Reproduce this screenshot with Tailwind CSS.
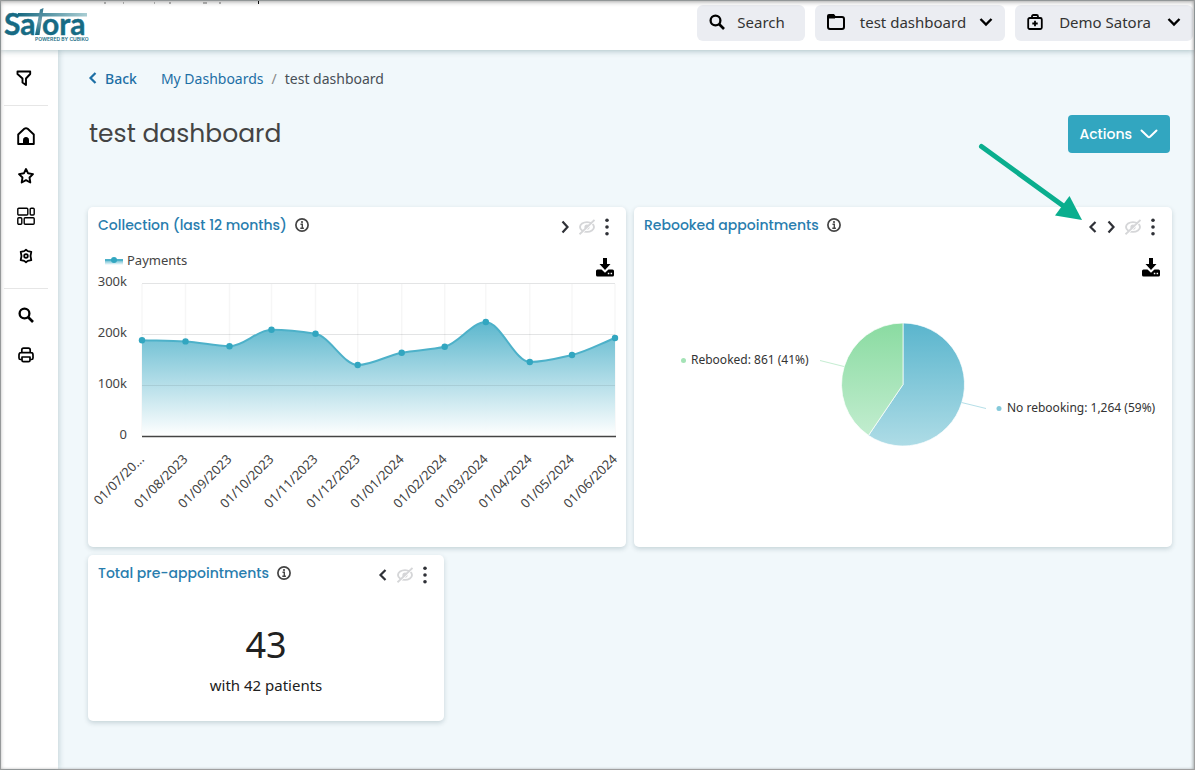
<!DOCTYPE html>
<html lang="en">
  <head>
    <meta charset="UTF-8" />
    <meta name="viewport" content="width=device-width, initial-scale=1.0" />
    <title>test dashboard - Satora</title>
    <script src="https://cdn.jsdelivr.net/npm/@tailwindcss/browser@4"></script>
  </head>
  <body class="bg-[#f1f8fb] font-['Noto_Sans',sans-serif] text-[#333]">
    <!-- Shared icons -->
    <svg class="hidden">
      <symbol id="i-left" viewBox="0 0 10 14"><path d="M7.5 2 2.5 7l5 5" fill="none" stroke="currentColor" stroke-width="2.2" /></symbol>
      <symbol id="i-right" viewBox="0 0 10 14"><path d="m2.5 1.500 5 5.500-5 5.500" fill="none" stroke="currentColor" stroke-width="2.2" /></symbol>
      <symbol id="i-down" viewBox="0 0 14 10"><path d="m1.5 2 5.500 5.500L12.500 2" fill="none" stroke="currentColor" stroke-width="2.400" /></symbol>
      <symbol id="i-search" viewBox="0 0 16 16"><circle cx="6.500" cy="6.500" r="4.900" fill="none" stroke="currentColor" stroke-width="2.300" /><path d="m10 10 5 5" stroke="currentColor" stroke-width="2.600" /></symbol>
      <symbol id="i-info" viewBox="0 0 14 14"><circle cx="7" cy="7" r="6.100" fill="none" stroke="currentColor" stroke-width="1.700" /><path d="M5.500 6.300H7.300V10M5.300 10.200h3.600" fill="none" stroke="currentColor" stroke-width="1.400" /><circle cx="7" cy="4" r="1.100" fill="currentColor" /></symbol>
      <symbol id="i-eye-off" viewBox="0 0 16 16"><ellipse cx="8" cy="8" rx="7" ry="4.900" fill="none" stroke="currentColor" stroke-width="1.900" /><circle cx="8" cy="8" r="2.600" fill="currentColor" /><path d="M1.300 16 16 2" stroke="#fff" stroke-width="1.200" /><path d="M.5 15.300 15.500 1" stroke="currentColor" stroke-width="1.900" /></symbol>
      <symbol id="i-dots" viewBox="0 0 6 18"><circle cx="3" cy="2.300" r="1.800" fill="currentColor" /><circle cx="3" cy="9" r="1.800" fill="currentColor" /><circle cx="3" cy="15.700" r="1.800" fill="currentColor" /></symbol>
      <symbol id="i-download" viewBox="0 0 18 20"><path d="M7 1h4v6h3.500L9 13 3.500 7H7z" fill="currentColor" /><path d="M1.500 12.500h4L9 15.800l3.500-3.300h4q1.500 0 1.500 1.500v4q0 1.500-1.500 1.500h-15Q0 19.500 0 18v-4q0-1.500 1.500-1.500z" fill="currentColor" /><path d="M11.800 16.500h1.500M14.600 16.500h1.500" stroke="#fff" stroke-width="1.400" /></symbol>
    </svg>

    <div class="relative flex min-h-screen flex-col border border-[#a0a0a0]">
      <header class="relative z-10 flex h-[49px] items-start justify-between bg-white pr-px shadow-[0_1px_6px_rgba(0,60,70,0.3)]">
        <svg class="absolute left-[100px] top-0 h-[4px] w-[160px]" viewBox="0 0 160 4" aria-hidden="true">
          <path d="M3 2h2M22 2h1M53 2h1M68 2h2M102 2h4M118 2h2" stroke="#777" />
          <path d="M157.500 0v3" stroke="#111" />
        </svg>
        <a href="#" aria-label="Satora home" class="pl-[2px] pt-[4px]">
          <svg class="h-[38px] w-[86px]" viewBox="0 0 86 38">
            <defs>
              <linearGradient id="logo-bar"><stop offset="0" stop-color="#15677f" /><stop offset="1" stop-color="#a9cdd3" /></linearGradient>
              <linearGradient id="logo-stem" x1="0" x2="0" y1="0" y2="1"><stop offset="0" stop-color="#357a90" /><stop offset=".5" stop-color="#6b9cab" /><stop offset="1" stop-color="#15677f" /></linearGradient>
            </defs>
            <path d="M15 8h69v3.500H14z" fill="url(#logo-bar)" />
            <path d="M37 4.500 40.500 3 36.500 30h-4.500z" fill="url(#logo-stem)" />
            <g fill="#176b84" stroke="#176b84" stroke-width=".4" font-family="Lato" font-weight="700" font-size="30">
              <text x="1" y="30">Sa</text>
              <text x="39" y="30">ora</text>
            </g>
            <text x="32" y="36" fill="#176b84" font-family="Inter" font-weight="600" font-size="5">POWERED BY CUBIKO</text>
          </svg>
        </a>
        <div class="flex gap-[10px] pt-[4px] text-[15px]">
          <button class="flex h-9 items-center rounded-md bg-[#ebedf2] pb-[2px] pl-3 pr-5">
            <svg class="mr-3 h-4 w-4 text-black"><use href="#i-search" /></svg>Search
          </button>
          <button class="flex h-9 items-center rounded-md bg-[#ebedf2] px-3 pb-[2px]">
            <svg class="mr-[15px] h-[18px] w-[18px] text-black" viewBox="0 0 18 18" fill="none" stroke="currentColor" stroke-width="2"><path d="M1 5V3q0-1 1-1h4.500l1.500 2H15q2 0 2 2v8q0 2-2 2H3q-2 0-2-2z" /><path d="M1 4h7" stroke-width="3" /></svg>
            <span class="pr-[13px]">test dashboard</span>
            <svg class="h-[10px] w-[14px] text-black"><use href="#i-down" /></svg>
          </button>
          <button class="flex h-9 items-center rounded-md bg-[#ebedf2] px-3 pb-[2px]">
            <svg class="mr-4 h-4 w-4 text-black" viewBox="0 0 16 16" fill="none" stroke="currentColor" stroke-width="1.800"><rect x="1.200" y="4" width="13.600" height="11" rx="1.500" /><path d="M5 4V2.500q0-1.500 1.500-1.500h3Q11 1 11 2.500V4M8 6.800v5.400M5.300 9.500h5.400" /></svg>
            <span class="pr-4">Demo Satora</span>
            <svg class="h-[10px] w-[14px] text-black"><use href="#i-down" /></svg>
          </button>
        </div>
      </header>

      <div class="flex grow">
        <!-- Sidebar -->
        <nav class="flex w-[57px] shrink-0 flex-col bg-white pl-[3px] pr-[6px] text-black shadow-[1px_0_6px_rgba(0,60,70,0.2)]">
          <div class="mr-1 flex h-[56px] items-center border-b border-[#e6e6e6] pl-[12px]">
            <button aria-label="Filters"><svg class="block h-4 w-4" viewBox="0 0 16 16" fill="none" stroke="currentColor" stroke-width="1.900" stroke-linejoin="round"><path d="M1.500 1.500h12.700V4L10 8.500V15l-3.500-2.500v-4L1.500 4z" /></svg></button>
          </div>
          <div class="mr-1 flex h-[183px] flex-col items-center gap-[22px] border-b border-[#e6e6e6] pt-[21px]">
            <a href="#" aria-label="Home"><svg class="block h-[18px] w-[18px]" viewBox="0 0 18 18" fill="none" stroke="currentColor" stroke-width="1.900" stroke-linejoin="round"><path d="M1.200 7.500 7.300 1.800Q9 .5 10.700 1.800l6.100 5.700V17H1.200z" /><path d="M6.500 16.500V12.500q0-2 2.500-2t2.500 2v4z" fill="currentColor" stroke-width="1" /></svg></a>
            <a href="#" aria-label="Favourites"><svg class="block h-[18px] w-[18px]" viewBox="0 0 18 18" fill="none" stroke="currentColor" stroke-width="1.900" stroke-linejoin="round"><path d="m9 2 2.100 4.300 4.900.8-3.500 3.400.8 5L9 13.200l-4.300 2.300.8-5L2 7.100l4.900-.8z" /></svg></a>
            <a href="#" aria-label="Dashboards"><svg class="block h-[18px] w-[18px]" viewBox="0 0 18 18" fill="none" stroke="currentColor" stroke-width="1.400"><rect x=".8" y="1.200" width="10" height="6.800" rx="1" /><rect x="13.200" y="1.200" width="4" height="6.800" rx="1" /><rect x=".8" y="10.700" width="4" height="6.500" rx="1" /><rect x="7.200" y="10.700" width="10" height="6.500" rx="1" /></svg></a>
            <a href="#" aria-label="Settings"><svg class="block h-[18px] w-[18px]" viewBox="0 0 18 18" fill="none" stroke="currentColor" stroke-width="1.800" stroke-linejoin="round"><path d="m9 2.700 1.800 1.400 3.500.7-.8 4.200.8 4.200-3.500.7L9 15.300l-1.800-1.400-3.500-.7.8-4.200-.8-4.200 3.500-.7z" /><circle cx="9" cy="9" r="1.800" /></svg></a>
          </div>
          <div class="mr-1 flex flex-col items-center gap-6 pt-[18px]">
            <button aria-label="Search"><svg class="block h-4 w-4"><use href="#i-search" /></svg></button>
            <button aria-label="Print"><svg class="block h-4 w-4" viewBox="0 0 16 16" fill="none" stroke="currentColor" stroke-width="1.700" stroke-linejoin="round"><path d="M3.800 5.500V3q0-1.800 1.800-1.800h4.800q1.800 0 1.800 1.800v2.500M3.800 12.500H2.500Q1 12.500 1 11V8q0-2.300 2-2.300h10q2 0 2 2.300v3q0 1.500-1.500 1.500h-1.300" /><path d="M4 10h8v3.200q0 1.500-1.500 1.500h-5Q4 14.700 4 13.200z" /></svg></button>
          </div>
        </nav>

        <main class="grow pl-[30px] pr-[22px] pt-[18px]">
          <nav class="flex h-5 items-center text-[14px] text-[#1d6fa5]">
            <a href="#" class="flex items-center font-medium"><svg class="mr-[7px] h-[14px] w-[10px]"><use href="#i-left" /></svg>Back</a>
            <a href="#" class="ml-6">My Dashboards</a>
            <span class="px-2 text-[#888]">/</span>
            <span class="text-[#484f56]">test dashboard</span>
          </nav>
          <div class="mt-[27px] flex h-[38px] items-center justify-between pl-px pr-[2px] font-['Poppins','Inter',sans-serif]">
            <h1 class="text-[25px] text-[#444]">test dashboard</h1>
            <button class="flex h-[38px] items-center rounded-[4px] bg-[#32a6c0] pl-[11px] pr-3 text-[14px] font-medium text-white">
              Actions
              <svg class="ml-2 h-[10px] w-[18px]" viewBox="0 0 18 10" fill="none" stroke="currentColor" stroke-width="2" stroke-linecap="round" stroke-linejoin="round"><path d="m1.500 1.500 6.500 6.300q1 .8 2 0l6.500-6.300" /></svg>
            </button>
          </div>

          <div class="mt-[54px] grid grid-cols-6 gap-2">
            <section class="relative col-span-3 rounded-[5px] bg-white shadow-[0_2px_5px_rgba(0,50,60,0.18)]">
              <div class="flex h-10 items-center pl-[10px] pr-4 text-[#2f3137]">
                <h2 class="pb-1 font-['Poppins','Inter',sans-serif] text-[14px] font-medium text-[#297dae]">Collection (last 12 months)</h2>
                <button aria-label="About collection" class="ml-2 mb-1 text-[#444]"><svg class="block h-[14px] w-[14px]"><use href="#i-info" /></svg></button>
                <button aria-label="Move right" class="ml-auto mr-[9px]"><svg class="block h-[14px] w-[10px]"><use href="#i-right" /></svg></button>
                <button aria-label="Hide" class="mr-[9px] text-[#d5d6d8]"><svg class="block h-4 w-4"><use href="#i-eye-off" /></svg></button>
                <button aria-label="More"><svg class="block h-[18px] w-[6px]"><use href="#i-dots" /></svg></button>
              </div>
              <svg id="payments-chart" class="block w-full" viewBox="0 0 538 300" font-family="Noto Sans" font-size="13" fill="#444">
                <defs>
                  <linearGradient id="area" x1="0" x2="0" y1="0" y2="1"><stop offset="0" stop-color="#57b5cc" /><stop offset="1" stop-color="#fff" /></linearGradient>
                </defs>
                <path d="M17 13h18v5H17z" fill="url(#area)" />
                <path d="M17 13h18" stroke="#4db1c9" stroke-width="2" />
                <circle cx="26" cy="13" r="3" fill="#32a6c0" />
                <text x="39" y="18">Payments</text>
                <g text-anchor="end">
                  <text x="39" y="39">300k</text>
                  <text x="39" y="90">200k</text>
                  <text x="39" y="141">100k</text>
                  <text x="39" y="192">0</text>
                </g>
                <path d="M54 36.500h473M54 87.500h473" stroke="#e3e4e5" />
                <g id="payments-grid" stroke="#000" stroke-opacity=".035"></g>
                <path id="payments-area" fill="url(#area)" fill-opacity=".97" />
                <path d="M54 138.500h473" stroke="#000" stroke-opacity=".08" />
                <path id="payments-line" fill="none" stroke="#4db1c9" stroke-width="2" />
                <g id="payments-dots" fill="#32a6c0"></g>
                <path d="M54 189.500h474" stroke="#444" stroke-width="1.300" />
                <g id="payments-labels" text-anchor="end"></g>
              </svg>
              <button aria-label="Download chart" class="absolute right-[2px] top-[50px] bg-white px-[10px] pb-[6px] text-black"><svg class="block h-5 w-[18px]"><use href="#i-download" /></svg></button>
            </section>

            <section class="relative col-span-3 rounded-[5px] bg-white shadow-[0_2px_5px_rgba(0,50,60,0.18)]">
              <div class="flex h-10 items-center pl-[10px] pr-4 text-[#2f3137]">
                <h2 class="pb-1 font-['Poppins','Inter',sans-serif] text-[14px] font-medium text-[#297dae]">Rebooked appointments</h2>
                <button aria-label="About rebooked appointments" class="ml-2 mb-1 text-[#444]"><svg class="block h-[14px] w-[14px]"><use href="#i-info" /></svg></button>
                <button aria-label="Move left" class="ml-auto mr-2"><svg class="block h-[14px] w-[10px]"><use href="#i-left" /></svg></button>
                <button aria-label="Move right" class="mr-[9px]"><svg class="block h-[14px] w-[10px]"><use href="#i-right" /></svg></button>
                <button aria-label="Hide" class="mr-[9px] text-[#d5d6d8]"><svg class="block h-4 w-4"><use href="#i-eye-off" /></svg></button>
                <button aria-label="More"><svg class="block h-[18px] w-[6px]"><use href="#i-dots" /></svg></button>
              </div>
              <svg class="block w-full" viewBox="0 0 538 300" font-family="Noto Sans" font-size="12" fill="#333">
                <defs>
                  <linearGradient id="blue" x1="0" x2="0" y1="0" y2="1"><stop offset="0" stop-color="#5ab5cd" /><stop offset="1" stop-color="#aedce6" /></linearGradient>
                  <linearGradient id="green" x1="0" x2="0" y1="0" y2="1"><stop offset="0" stop-color="#8adba1" /><stop offset="1" stop-color="#c2edcf" /></linearGradient>
                </defs>
                <g stroke="#fff" stroke-opacity=".7" stroke-linejoin="round">
                  <path d="M269 137.500V76A61.500 61.500 0 1 1 234.500 188.400z" fill="url(#blue)" />
                  <path d="M269 137.500 234.500 188.400A61.500 61.500 0 0 1 269 76z" fill="url(#green)" />
                </g>
                <path d="m186 113.500 24 6" stroke="#c5edd2" />
                <path d="m327.500 155.500 24.500 6" stroke="#b5dfe8" />
                <circle cx="49.500" cy="113.500" r="2.500" fill="#a4e3b6" />
                <circle cx="365" cy="161.500" r="2.500" fill="#84c9da" />
                <text x="57" y="117">Rebooked: 861 (41%)</text>
                <text x="373" y="165">No rebooking: 1,264 (59%)</text>
              </svg>
              <button aria-label="Download chart" class="absolute right-[2px] top-[50px] bg-white px-[10px] pb-[6px] text-black"><svg class="block h-5 w-[18px]"><use href="#i-download" /></svg></button>
              <!-- Pointer to the move buttons -->
              <svg class="absolute right-[90px] top-[-65px] h-[80px] w-[106px]" viewBox="0 0 106 80" aria-hidden="true">
                <path d="m5.500 4.500 84 61" stroke="#0aae8e" stroke-width="5" stroke-linecap="round" />
                <path d="M106 78 79 73.500 93.500 54z" fill="#0aae8e" />
              </svg>
            </section>

            <section class="col-span-2 h-[166px] rounded-[5px] bg-white shadow-[0_2px_5px_rgba(0,50,60,0.18)]">
              <div class="flex h-10 items-center pl-[10px] pr-4 text-[#2f3137]">
                <h2 class="pb-1 font-['Poppins','Inter',sans-serif] text-[14px] font-medium text-[#297dae]">Total pre-appointments</h2>
                <button aria-label="About total pre-appointments" class="ml-2 mb-1 text-[#444]"><svg class="block h-[14px] w-[14px]"><use href="#i-info" /></svg></button>
                <button aria-label="Move left" class="ml-auto mr-[9px]"><svg class="block h-[14px] w-[10px]"><use href="#i-left" /></svg></button>
                <button aria-label="Hide" class="mr-[9px] text-[#d5d6d8]"><svg class="block h-4 w-4"><use href="#i-eye-off" /></svg></button>
                <button aria-label="More"><svg class="block h-[18px] w-[6px]"><use href="#i-dots" /></svg></button>
              </div>
              <p class="mt-[26px] text-center text-[36px] leading-[48px] text-[#212121]">43</p>
              <p class="mt-[6px] text-center text-[15px] leading-5 text-[#212121]">with 42 patients</p>
            </section>
          </div>
        </main>
      </div>
      <div class="pointer-events-none absolute inset-0 z-20 shadow-[inset_0_2px_4px_rgba(0,0,0,0.2),inset_-1px_0_3px_rgba(0,0,0,0.2)]"></div>
    </div>

    <script>
      // [label, x, y] of each month on the chart
      const payments = [
        ['01/07/20...', 54, 93.3], ['01/08/2023', 97.5, 94.4], ['01/09/2023', 141.5, 99.3],
        ['01/10/2023', 183.5, 82.8], ['01/11/2023', 227.5, 86.8], ['01/12/2023', 269.7, 118],
        ['01/01/2024', 313.7, 105.7], ['01/02/2024', 356.7, 99.8], ['01/03/2024', 397.8, 75],
        ['01/04/2024', 441.8, 115], ['01/05/2024', 484, 108], ['01/06/2024', 527, 91],
      ];

      // Monotone slopes, so the curve never overshoots a point
      const slope = (i) => (payments[i + 1][2] - payments[i][2]) / (payments[i + 1][1] - payments[i][1]);
      const tangents = payments.map((p, i) => {
        if (i === 0) return slope(0);
        if (i === payments.length - 1) return slope(i - 1);
        const a = slope(i - 1);
        const b = slope(i);
        return a * b <= 0 ? 0 : (2 * a * b) / (a + b);
      });

      let line = `M${payments[0][1]} ${payments[0][2]}`;
      for (let i = 1; i < payments.length; i++) {
        const [, x0, y0] = payments[i - 1];
        const [, x1, y1] = payments[i];
        const dx = (x1 - x0) / 3;
        line += `C${x0 + dx} ${y0 + dx * tangents[i - 1]} ${x1 - dx} ${y1 - dx * tangents[i]} ${x1} ${y1}`;
      }
      document.getElementById('payments-line').setAttribute('d', line);
      document.getElementById('payments-area').setAttribute('d', line + 'V189H54z');
      document.getElementById('payments-grid').innerHTML = payments.map(([, x]) => `<path d="M${x} 37V189" stroke-width="1.5" />`).join('');
      document.getElementById('payments-dots').innerHTML = payments.map(([, x, y]) => `<circle cx="${x}" cy="${y}" r="3.2" />`).join('');
      document.getElementById('payments-labels').innerHTML = payments
        .map(([label, x]) => `<text transform="translate(${x + 3} 213) rotate(-45)">${label}</text>`)
        .join('');
    </script>
  </body>
</html>
